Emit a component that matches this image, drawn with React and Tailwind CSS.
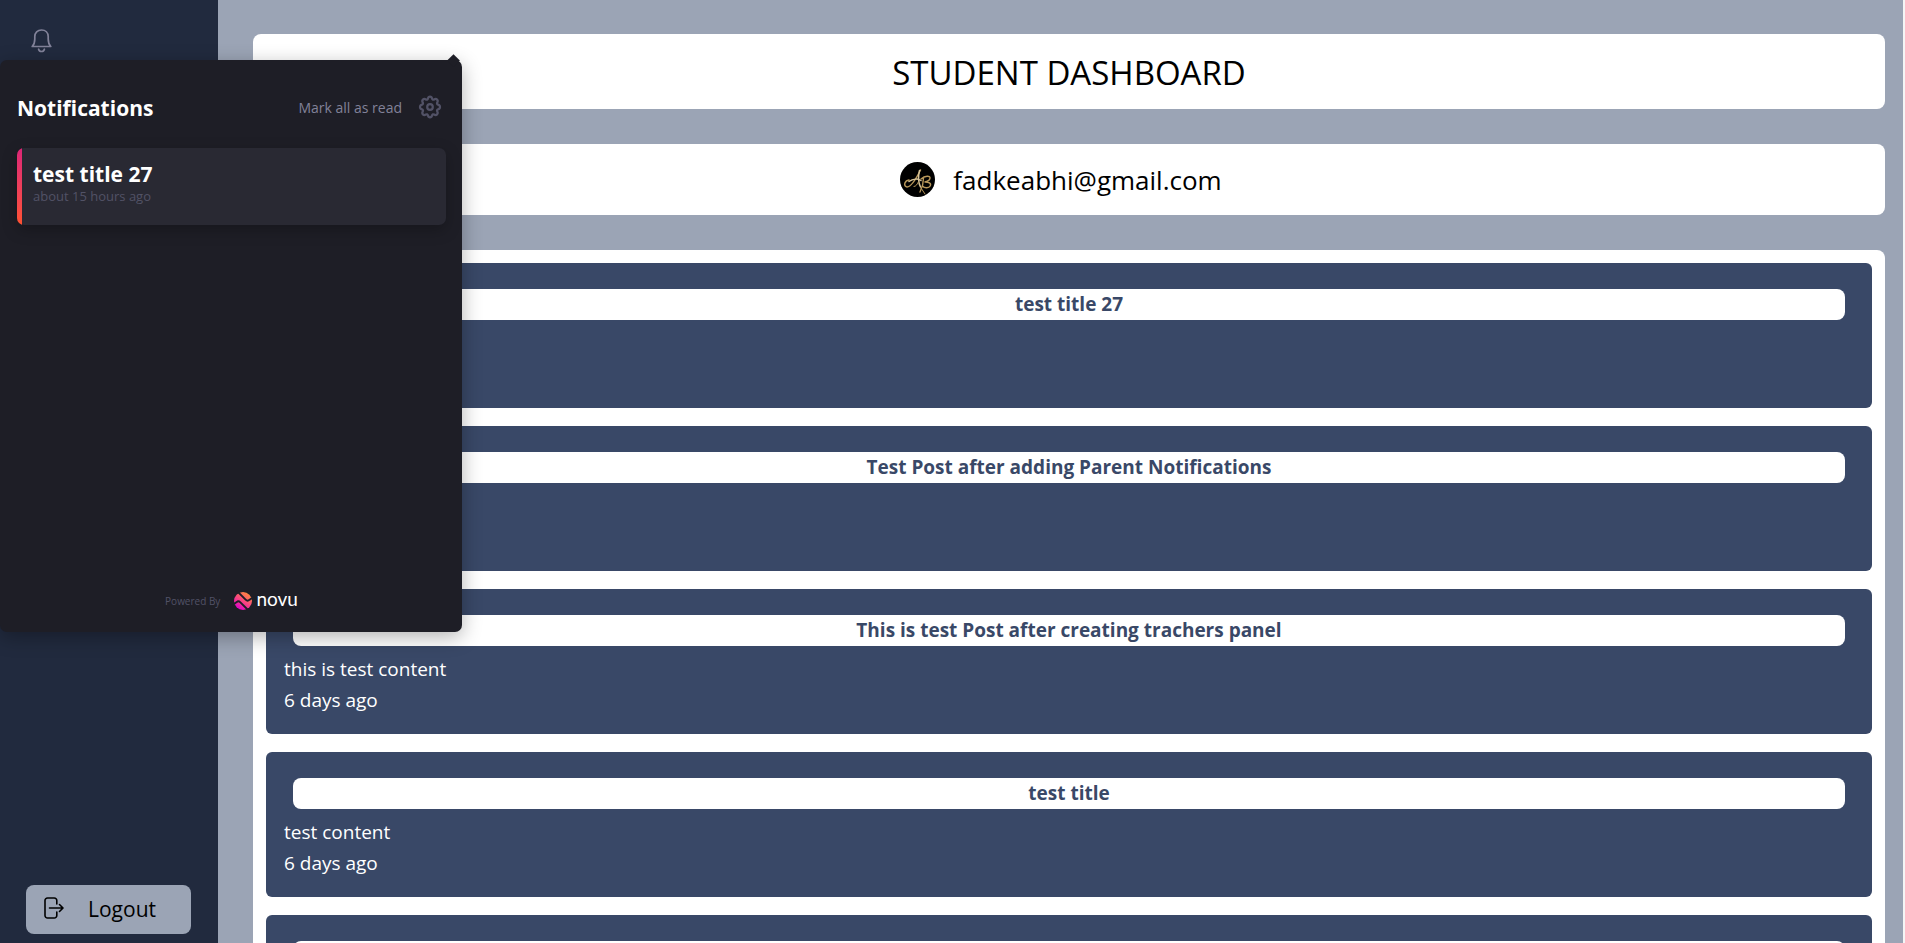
import React from "react";

const posts = [
  { title: "test title 27", content: "test content 27", time: "15 hours ago" },
  { title: "Test Post after adding Parent Notifications", content: "test content", time: "5 days ago" },
  { title: "This is test Post after creating trachers panel", content: "this is test content", time: "6 days ago" },
  { title: "test title", content: "test content", time: "6 days ago" },
  { title: "test title", content: "test content", time: "6 days ago" },
];

function BellIcon() {
  return (
    <svg width="21" height="24" viewBox="0 0 21 24" fill="none" stroke="#828299" strokeWidth="1.7" aria-hidden="true">
      <path d="M1.200 17.500C3 15.600 3.800 13.200 3.800 10V7.600C3.800 3.700 6.500 1 10.500 1s6.700 2.700 6.700 6.600V10c0 3.200.8 5.600 2.600 7.500z" strokeLinejoin="round" />
      <path d="M7.600 20.200c.4 1.500 1.500 2.300 2.900 2.300s2.500-.8 2.900-2.300" strokeLinecap="round" />
    </svg>
  );
}

function GearIcon() {
  return (
    <svg width="24" height="24" viewBox="0 0 24 24" fill="none" stroke="#525266" strokeWidth="2.200" strokeLinejoin="round" aria-hidden="true">
      <circle cx="12" cy="12" r="2.800" />
      <path d="M9.900 3.700c.5-2.700 3.700-2.700 4.200 0 .2.900 1.200 1.300 2 .8 2.300-1.500 4.600.8 3.100 3.100-.5.800-.1 1.800.8 2 2.700.6 2.700 4.200 0 4.800-.9.200-1.300 1.200-.8 2 1.500 2.300-.8 4.600-3.100 3.100-.8-.5-1.800-.1-2 .8-.5 2.700-3.700 2.700-4.200 0-.2-.9-1.200-1.300-2-.8-2.300 1.500-4.600-.8-3.100-3.100.5-.8.100-1.800-.8-2-2.700-.6-2.700-4.200 0-4.800.9-.2 1.300-1.200.8-2-1.500-2.300.8-4.600 3.100-3.100.8.5 1.800.1 2-.8z" />
    </svg>
  );
}

function LogoutIcon() {
  return (
    <svg className="mb-1" width="20" height="22" viewBox="0 0 20 22" fill="none" stroke="#000" strokeWidth="1.600" strokeLinecap="round" strokeLinejoin="round" aria-hidden="true">
      <path d="M12.800 7V3.500A2.500 2.500 0 0 0 10.300 1H3.500A2.500 2.500 0 0 0 1 3.500v15A2.500 2.500 0 0 0 3.500 21h6.800a2.500 2.500 0 0 0 2.500-2.500V15" />
      <path d="M5.500 11h13.200M15.500 7.500 19 11l-3.500 3.500" />
    </svg>
  );
}

function NovuMark() {
  return (
    <svg width="18" height="18" viewBox="0 0 18 18" aria-hidden="true">
      <defs>
        <linearGradient id="novu" x1="4" y1="17" x2="14" y2="1" gradientUnits="userSpaceOnUse">
          <stop stopColor="#dd00ca" />
          <stop offset="0.5" stopColor="#f9477f" />
          <stop offset="1" stopColor="#ff8a3d" />
        </linearGradient>
      </defs>
      <circle cx="9" cy="9" r="9" fill="url(#novu)" />
      <path d="M4.500 .5 11.600 7.600C13.200 9.200 14.300 8.900 15.300 7.900L18 6" fill="none" stroke="#1e1e26" strokeWidth="1.900" />
      <path d="M13.500 17.500 6.400 10.400C4.800 8.800 3.700 9.100 2.700 10.100L0 12" fill="none" stroke="#1e1e26" strokeWidth="1.900" />
    </svg>
  );
}

function Avatar() {
  return (
    <svg width="35" height="35" viewBox="0 0 35 35" role="img" aria-label="Profile">
      <circle cx="17.500" cy="17.500" r="17.500" fill="#000" />
      <g fill="none" stroke="#b8975a" strokeLinecap="round">
        <path d="M9 18c-4 .5-6 5.500-2.500 6.800C11 26 16 17 20.500 8" strokeWidth="1.500" />
        <path d="M19.500 8.500c-1.500 6-1.500 11.500 1 16.500M9 19.500c4-3 9-3 12-1" strokeWidth="1.500" stroke="#d8c49a" />
        <path d="M23.500 16c0 6-1.500 10-3.500 14M21 17c4-3.500 9.500-3.500 9-.8-.3 2.300-3 3.500-5.500 3.800 4-.2 7.200 1.400 5.700 4-1.500 2.600-6 2-7.500.2" strokeWidth="1.400" />
        <path d="M21 26l4 6M14 24.500c2 0 3-2 4-4" strokeWidth="1" />
      </g>
    </svg>
  );
}

function Notifications() {
  return (
    <section
      aria-label="Notifications"
      className="absolute left-0 top-[60px] z-10 flex h-[572px] w-[462px] flex-col rounded-[7px] bg-[#1e1e26] pl-[17px] pr-4 shadow-[0_5px_20px_rgba(0,0,0,0.3)]"
    >
      <span className="absolute -top-1 right-1 size-[9px] rotate-45 bg-[#1e1e26]" />
      <header className="flex h-[88px] items-center justify-between pr-1 pt-[6px]">
        <h2 className="pt-1 text-[21px] font-bold text-white">Notifications</h2>
        <div className="flex items-center gap-4">
          <button type="button" className="text-[14px] text-[#828299]">Mark all as read</button>
          <button type="button" aria-label="Settings"><GearIcon /></button>
        </div>
      </header>
      <button
        type="button"
        className="flex h-[77px] shrink-0 overflow-hidden rounded-[7px] bg-[#292933] text-left shadow-[0_5px_15px_rgba(0,0,0,0.25)]"
      >
        <span className="h-full w-[5px] bg-linear-to-b from-[#dd2476] to-[#ff512f]" />
        <span className="flex flex-col px-[11px] pt-3">
          <span className="text-[21px] leading-7 font-bold text-white">test title 27</span>
          <span className="text-[13px] leading-4 text-[#525266]">about 15 hours ago</span>
        </span>
      </button>
      <footer className="mt-auto flex h-[62px] items-center justify-center gap-[14px]">
        <span className="text-[10px] text-[#525266]">Powered By</span>
        <a href="#novu" className="flex items-center gap-1">
          <NovuMark />
          <span className="pb-1 font-['Lato',sans-serif] text-[19px] leading-5 font-normal text-white">novu</span>
        </a>
      </footer>
    </section>
  );
}

export default function App() {
  return (
    <div className="relative flex h-screen overflow-hidden bg-[#9ba4b5] font-['Open_Sans','Noto_Sans',sans-serif] text-black">
      <aside className="flex w-[218px] shrink-0 flex-col justify-between bg-[#212a3e]">
        <button type="button" aria-label="Open notifications" className="ml-[31px] mt-[29px] self-start">
          <BellIcon />
        </button>
        <button
          type="button"
          className="ml-[26px] mr-[27px] mb-[9px] flex h-[49px] items-center gap-6 rounded-lg bg-[#9ba4b5] px-[18px] pt-px text-[21px]"
        >
          <LogoutIcon />
          Logout
        </button>
      </aside>
      <Notifications />
      <main className="flex min-w-0 flex-1 flex-col gap-[35px] overflow-y-auto border-r-2 border-[#f5f5f5] pl-[35px] pr-[18px] pt-[34px] [scrollbar-width:none]">
        <h1 className="flex h-[75px] shrink-0 items-center justify-center rounded-lg bg-white pt-[2px] text-[33px] font-medium">
          STUDENT DASHBOARD
        </h1>
        <div className="flex h-[71px] shrink-0 items-center justify-center gap-[18px] rounded-lg bg-white pr-4 text-[26px] font-medium">
          <Avatar />
          <span className="pt-[2px]">fadkeabhi@gmail.com</span>
        </div>
        <ul className="flex shrink-0 flex-col gap-[18px] rounded-lg bg-white p-[13px]">
          {posts.map((post, i) => (
            <li key={i} className="rounded-md bg-[#394867] p-[18px] text-[19px] leading-[31px] text-white">
              <h2 className="mx-[9px] my-2 rounded-lg bg-white text-center font-bold text-[#394867]">{post.title}</h2>
              <p>{post.content}</p>
              <p>{post.time}</p>
            </li>
          ))}
        </ul>
      </main>
    </div>
  );
}
